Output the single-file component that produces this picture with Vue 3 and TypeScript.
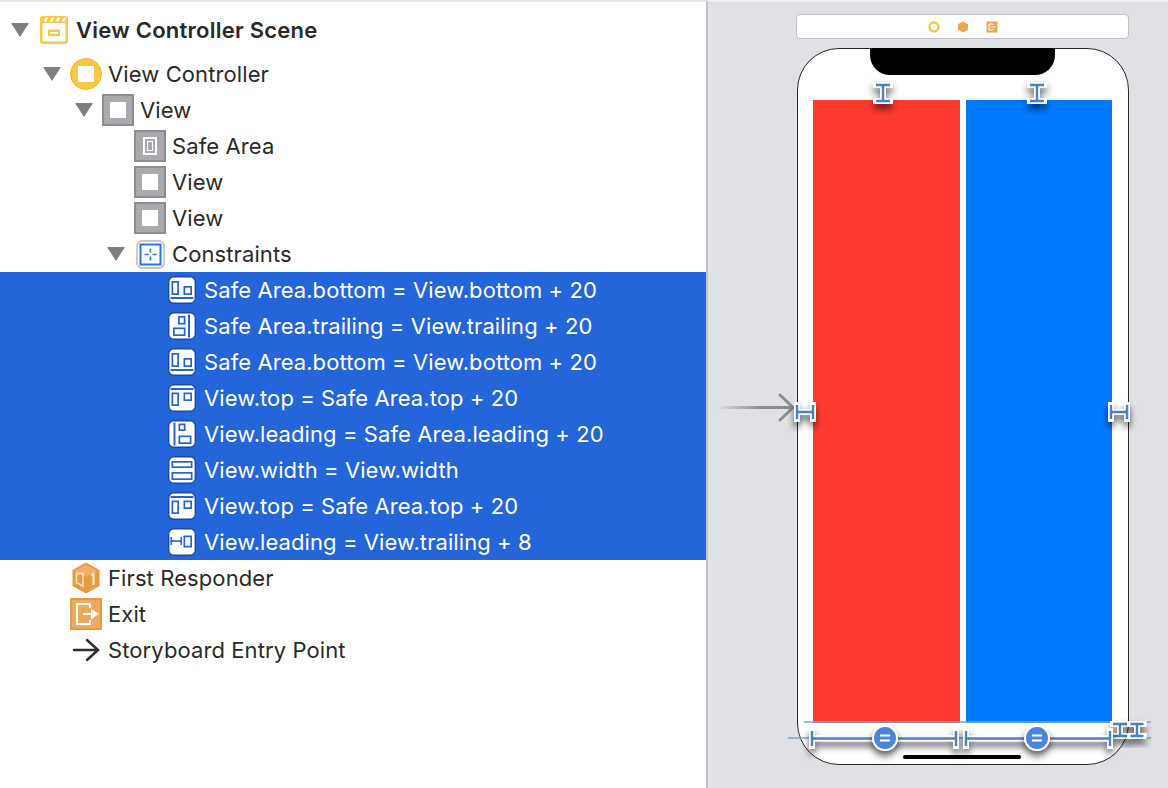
<template>
  <div class="editor">
    <div class="outline">
      <div
        v-for="row in rows"
        :key="row.id"
        :class="['row', { selected: row.selected, scene: row.kind === 'scene' }]"
        :style="{ paddingLeft: 6 + row.depth * 32 + 'px' }"
      >
        <span class="arrow-slot"><i v-if="row.open" class="triangle"></i></span>
        <span class="icon-slot">
          <svg v-if="row.kind === 'scene'" width="28" height="28" viewBox="0 0 28 28">
            <rect width="28" height="28" rx="3" fill="#f7c843" />
            <rect x="2.500" y="7" width="23" height="18.500" rx="1" fill="#fff" />
            <path d="M5 5.500 7 1.500M11 5.500 13 1.500M17 5.500 19 1.500M23 5.500 25 1.500" stroke="#fff" stroke-width="2.400" />
            <rect x="8" y="13.500" width="12" height="6.500" fill="#f7c843" />
            <rect x="10" y="16" width="8" height="1.600" fill="#fff" />
          </svg>
          <svg v-else-if="row.kind === 'controller'" width="32" height="32" viewBox="0 0 32 32">
            <circle cx="16" cy="16" r="15.500" fill="#f6c945" stroke="#f2b63a" />
            <rect x="8" y="8" width="16" height="16" fill="#fff" />
          </svg>
          <span v-else-if="row.kind === 'view'" class="view-icon"><b></b></span>
          <span v-else-if="row.kind === 'safe'" class="view-icon safe"><b><u></u></b></span>
          <svg v-else-if="row.kind === 'constraints'" width="29" height="29" viewBox="0 0 29 29">
            <rect x="1" y="1" width="27" height="27" rx="5" fill="#fff" stroke="#c6c6c8" stroke-width="1.800" />
            <rect x="4.500" y="4.500" width="20" height="20" fill="#fff" stroke="#2c73e6" stroke-width="2" />
            <path d="M14.500 8.500v4M14.500 16.500v4M8.500 14.500h4M16.500 14.500h4" stroke="#2c73e6" stroke-width="1.600" />
          </svg>
          <svg v-else-if="row.rects" class="constraint" width="28" height="28" viewBox="0 0 28 28">
            <rect x="0.700" y="0.700" width="26.600" height="26.600" rx="5" fill="#fff" stroke="#1b4aa0" stroke-width="1.400" />
            <template v-for="(r, i) in row.rects" :key="i">
              <rect v-if="r[4]" :x="r[0]" :y="r[1]" :width="r[2]" :height="r[3]" fill="#2465d9" />
              <rect v-else :x="r[0] + 0.850" :y="r[1] + 0.850" :width="r[2] - 1.700" :height="r[3] - 1.700" fill="none" stroke="#2465d9" stroke-width="1.700" />
            </template>
          </svg>
          <svg v-else-if="row.kind === 'responder'" width="28" height="32" viewBox="0 0 28 32">
            <path d="M14 0.500 27.500 8v16L14 31.500 0.500 24V8Z" fill="#e99a3e" />
            <path d="M14 2.500 25.500 9 14 15 2.500 9Z" fill="#efb069" />
            <path d="M4.500 11.500h6.500v12.500l-6.500-3.200Z" fill="none" stroke="#f8dcb9" stroke-width="1.800" />
            <path d="M19 13.500 21.500 12v11" fill="none" stroke="#fbe6cc" stroke-width="2.200" />
          </svg>
          <svg v-else-if="row.kind === 'exit'" width="32" height="32" viewBox="0 0 32 32">
            <rect x="1" y="1" width="30" height="30" fill="#edaa5e" stroke="#e89a3c" stroke-width="2" />
            <path d="M20 10V6H7v20h13v-4" fill="none" stroke="#fff" stroke-width="2" />
            <path d="M13 16h13M22 12.500 27 16l-5 3.500Z" fill="#fff" stroke="#fff" stroke-width="2" />
          </svg>
          <svg v-else width="28" height="24" viewBox="0 0 28 24">
            <path d="M2 12h23M15 2l11 10-11 10" fill="none" stroke="#2e2e2e" stroke-width="2.500" stroke-linecap="round" />
          </svg>
        </span>
        <span class="label">{{ row.label }}</span>
      </div>
    </div>

    <div class="canvas">
      <div class="scene-bar">
        <svg width="12" height="12" viewBox="0 0 12 12"><circle cx="6" cy="6" r="4.500" fill="#fff" stroke="#f6c945" stroke-width="2.400" /></svg>
        <svg width="12" height="12" viewBox="0 0 12 12"><path d="M6 .5 11 3.200v5.600L6 11.500 1 8.800V3.200Z" fill="#eda654" /></svg>
        <svg width="12" height="12" viewBox="0 0 12 12"><rect x=".5" y=".5" width="11" height="11" fill="#eda654" /><path d="M7 4V3H3v6h4V8M5 6h4" fill="none" stroke="#fff" /></svg>
      </div>
      <div class="device">
        <div class="notch"></div>
        <div class="pane red"></div>
        <div class="pane blue"></div>
        <div class="home"></div>
      </div>

      <!-- constraint overlays, drawn in window coordinates -->
      <svg class="overlay" width="460" height="788" viewBox="708 0 460 788">
        <defs>
          <linearGradient id="entry" x1="0" x2="1" y1="0" y2="0">
            <stop offset="0" stop-color="#8c8c8c" stop-opacity="0" />
            <stop offset="0.600" stop-color="#8c8c8c" />
          </linearGradient>
          <filter id="lift" x="-60%" y="-60%" width="220%" height="260%">
            <feDropShadow dx="0" dy="5" stdDeviation="3.500" flood-color="#000" flood-opacity="0.600" />
          </filter>
        </defs>

        <rect x="716" y="406" width="76" height="3" fill="url(#entry)" />
        <path d="M780 395 793 407.500 780 420" fill="none" stroke="#8c8c8c" stroke-width="3" stroke-linecap="round" />

        <path d="M804 722H1151M788 738H1151" stroke="#7ba6e2" stroke-width="1.500" />

        <g v-for="h in handles" :key="h.id" filter="url(#lift)">
          <path :d="h.d" fill="none" stroke="#fff" stroke-width="6" stroke-linecap="square" />
          <path :d="h.d" fill="none" stroke="#4a80c8" stroke-width="2.400" />
        </g>

        <g v-for="cx in [885, 1037]" :key="cx" filter="url(#lift)">
          <circle :cx="cx" cy="738" r="12" fill="#4a86dc" stroke="#fff" stroke-width="2" />
          <path :d="`M${cx - 5} 735.500h10M${cx - 5} 740.500h10`" stroke="#fff" stroke-width="2" />
        </g>
      </svg>
    </div>
  </div>
</template>

<script setup lang="ts">
type Rect = [number, number, number, number, number?]

interface Row {
  id: number
  label: string
  depth: number
  kind: string
  open?: boolean
  selected?: boolean
  rects?: Rect[]
}

// x, y, w, h, and a 1 for a solid bar
const bottom: Rect[] = [[3.5, 5, 7.5, 14], [15.500, 10, 8.500, 9], [2.500, 21, 23, 2, 1]]
const trailing: Rect[] = [[10, 4, 7.500, 8.500], [5, 15.500, 12.500, 8.500], [20, 2.500, 2, 23, 1]]
const top: Rect[] = [[2.500, 4, 23, 2, 1], [3.500, 8.500, 7.500, 13.500], [15.500, 8.500, 8.500, 8.500]]
const leading: Rect[] = [[5.500, 2.500, 2, 23, 1], [10.500, 3.500, 7, 7.500], [10.500, 15.500, 13, 8.500]]
const width: Rect[] = [[3.500, 5, 21, 7], [3.500, 16, 21, 8]]
const spacing: Rect[] = [[2.500, 9, 1.500, 8, 1], [2.500, 12.200, 11, 1.600, 1], [12.500, 9, 1.500, 8, 1], [15.500, 7.500, 8.500, 12]]

const rows: Row[] = [
  { id: 1, label: 'View Controller Scene', depth: 0, kind: 'scene', open: true },
  { id: 2, label: 'View Controller', depth: 1, kind: 'controller', open: true },
  { id: 3, label: 'View', depth: 2, kind: 'view', open: true },
  { id: 4, label: 'Safe Area', depth: 3, kind: 'safe' },
  { id: 5, label: 'View', depth: 3, kind: 'view' },
  { id: 6, label: 'View', depth: 3, kind: 'view' },
  { id: 7, label: 'Constraints', depth: 3, kind: 'constraints', open: true },
  { id: 8, label: 'Safe Area.bottom = View.bottom + 20', depth: 4, kind: 'constraint', selected: true, rects: bottom },
  { id: 9, label: 'Safe Area.trailing = View.trailing + 20', depth: 4, kind: 'constraint', selected: true, rects: trailing },
  { id: 10, label: 'Safe Area.bottom = View.bottom + 20', depth: 4, kind: 'constraint', selected: true, rects: bottom },
  { id: 11, label: 'View.top = Safe Area.top + 20', depth: 4, kind: 'constraint', selected: true, rects: top },
  { id: 12, label: 'View.leading = Safe Area.leading + 20', depth: 4, kind: 'constraint', selected: true, rects: leading },
  { id: 13, label: 'View.width = View.width', depth: 4, kind: 'constraint', selected: true, rects: width },
  { id: 14, label: 'View.top = Safe Area.top + 20', depth: 4, kind: 'constraint', selected: true, rects: top },
  { id: 15, label: 'View.leading = View.trailing + 8', depth: 4, kind: 'constraint', selected: true, rects: spacing },
  { id: 16, label: 'First Responder', depth: 1, kind: 'responder' },
  { id: 17, label: 'Exit', depth: 1, kind: 'exit' },
  { id: 18, label: 'Storyboard Entry Point', depth: 1, kind: 'entry' },
]

const iBeam = (x: number, y: number, w = 7, h = 8) =>
  `M${x - w} ${y - h}h${w * 2}M${x - w} ${y + h}h${w * 2}M${x} ${y - h}v${h * 2}`
const hBeam = (x: number, y: number, w = 8, h = 7) =>
  `M${x - w} ${y - h}v${h * 2}M${x + w} ${y - h}v${h * 2}M${x - w} ${y}h${w * 2}`

const handles = [
  { id: 'top-l', d: iBeam(883, 93) },
  { id: 'top-r', d: iBeam(1037, 93) },
  { id: 'lead', d: hBeam(805, 412) },
  { id: 'gap', d: 'M958 412h7' },
  { id: 'trail', d: hBeam(1119, 412) },
  { id: 'bottom-l', d: iBeam(1120, 730, 7, 6) },
  { id: 'bottom-r', d: iBeam(1137, 730, 6.500, 6) },
  { id: 'row', d: 'M812 731v15M812 738.500H956M956 731v15M966 731v15M966 738.500H1110M1110 731v15' },
]
</script>

<style>
html,
body {
  margin: 0;
  background: #fff;
}
</style>

<style scoped>
.editor {
  display: flex;
  width: 1168px;
  height: 788px;
  overflow: hidden;
  font-family: Inter, "Liberation Sans", sans-serif;
}

.outline {
  width: 706px;
  flex: none;
  padding-top: 8px;
  box-sizing: border-box;
  border-top: 2px solid #e6e6e6;
  background: #fff;
  color: #2b2b2b;
  font-size: 22px;
  letter-spacing: 0.1px;
}

.row {
  display: flex;
  align-items: center;
  height: 36px;
  box-sizing: border-box;
  white-space: nowrap;
}

.row.scene {
  height: 44px;
  margin-top: -2px;
  margin-bottom: 4px;
  font-weight: 600;
  letter-spacing: 0.25px;
}

.row.selected {
  background: #2465d9;
  color: #fff;
}

.row.selected .label {
  letter-spacing: 0.08px;
}

.arrow-slot {
  display: flex;
  flex: none;
  width: 32px;
  padding-left: 5px;
  box-sizing: border-box;
}

.triangle {
  width: 0;
  height: 0;
  border-left: 9px solid transparent;
  border-right: 9px solid transparent;
  border-top: 14px solid #7f7f7f;
}

.icon-slot {
  display: flex;
  flex: none;
  align-items: center;
  justify-content: center;
  width: 32px;
  margin-right: 6px;
}

.view-icon {
  display: flex;
  align-items: center;
  justify-content: center;
  width: 32px;
  height: 32px;
  box-sizing: border-box;
  border: 2px solid #8e8e93;
  background: #a9a9ae;
}

.view-icon b {
  display: block;
  width: 16px;
  height: 16px;
  background: #fff;
}

.view-icon.safe b {
  display: flex;
  align-items: center;
  justify-content: center;
  width: 14px;
  height: 18px;
  box-sizing: border-box;
  border: 2px solid #fff;
  background: #a9a9ae;
}

.view-icon.safe u {
  display: block;
  width: 6px;
  height: 10px;
  box-sizing: border-box;
  border: 1.500px solid #fff;
}

.canvas {
  position: relative;
  flex: 1;
  border-left: 2px solid #c4c4c6;
  border-top: 2px solid #eeeef0;
  background: #e0e1e5;
}

.scene-bar {
  display: flex;
  align-items: center;
  justify-content: center;
  gap: 17px;
  width: 333px;
  height: 25px;
  margin: 12px 0 0 88px;
  box-sizing: border-box;
  border: 1px solid #c2c2c6;
  border-radius: 4px;
  background: #fff;
}

.device {
  position: relative;
  display: flex;
  gap: 6px;
  width: 332px;
  height: 717px;
  margin: 9px 0 0 89px;
  padding: 50.500px 16px 41.500px 15px;
  box-sizing: border-box;
  border: 1.500px solid #2a2a2a;
  border-radius: 42px;
  background: #fff;
}

.notch {
  position: absolute;
  top: -1px;
  left: 72px;
  width: 185px;
  height: 27px;
  border-radius: 0 0 20px 20px;
  background: #000;
}

.pane {
  flex: 1;
}

.red {
  background: #ff3b30;
}

.blue {
  background: #007aff;
}

.home {
  position: absolute;
  bottom: 5px;
  left: 105px;
  width: 118px;
  height: 4px;
  border-radius: 2px;
  background: #000;
}

.overlay {
  position: absolute;
  top: -2px;
  left: 0;
}
</style>
